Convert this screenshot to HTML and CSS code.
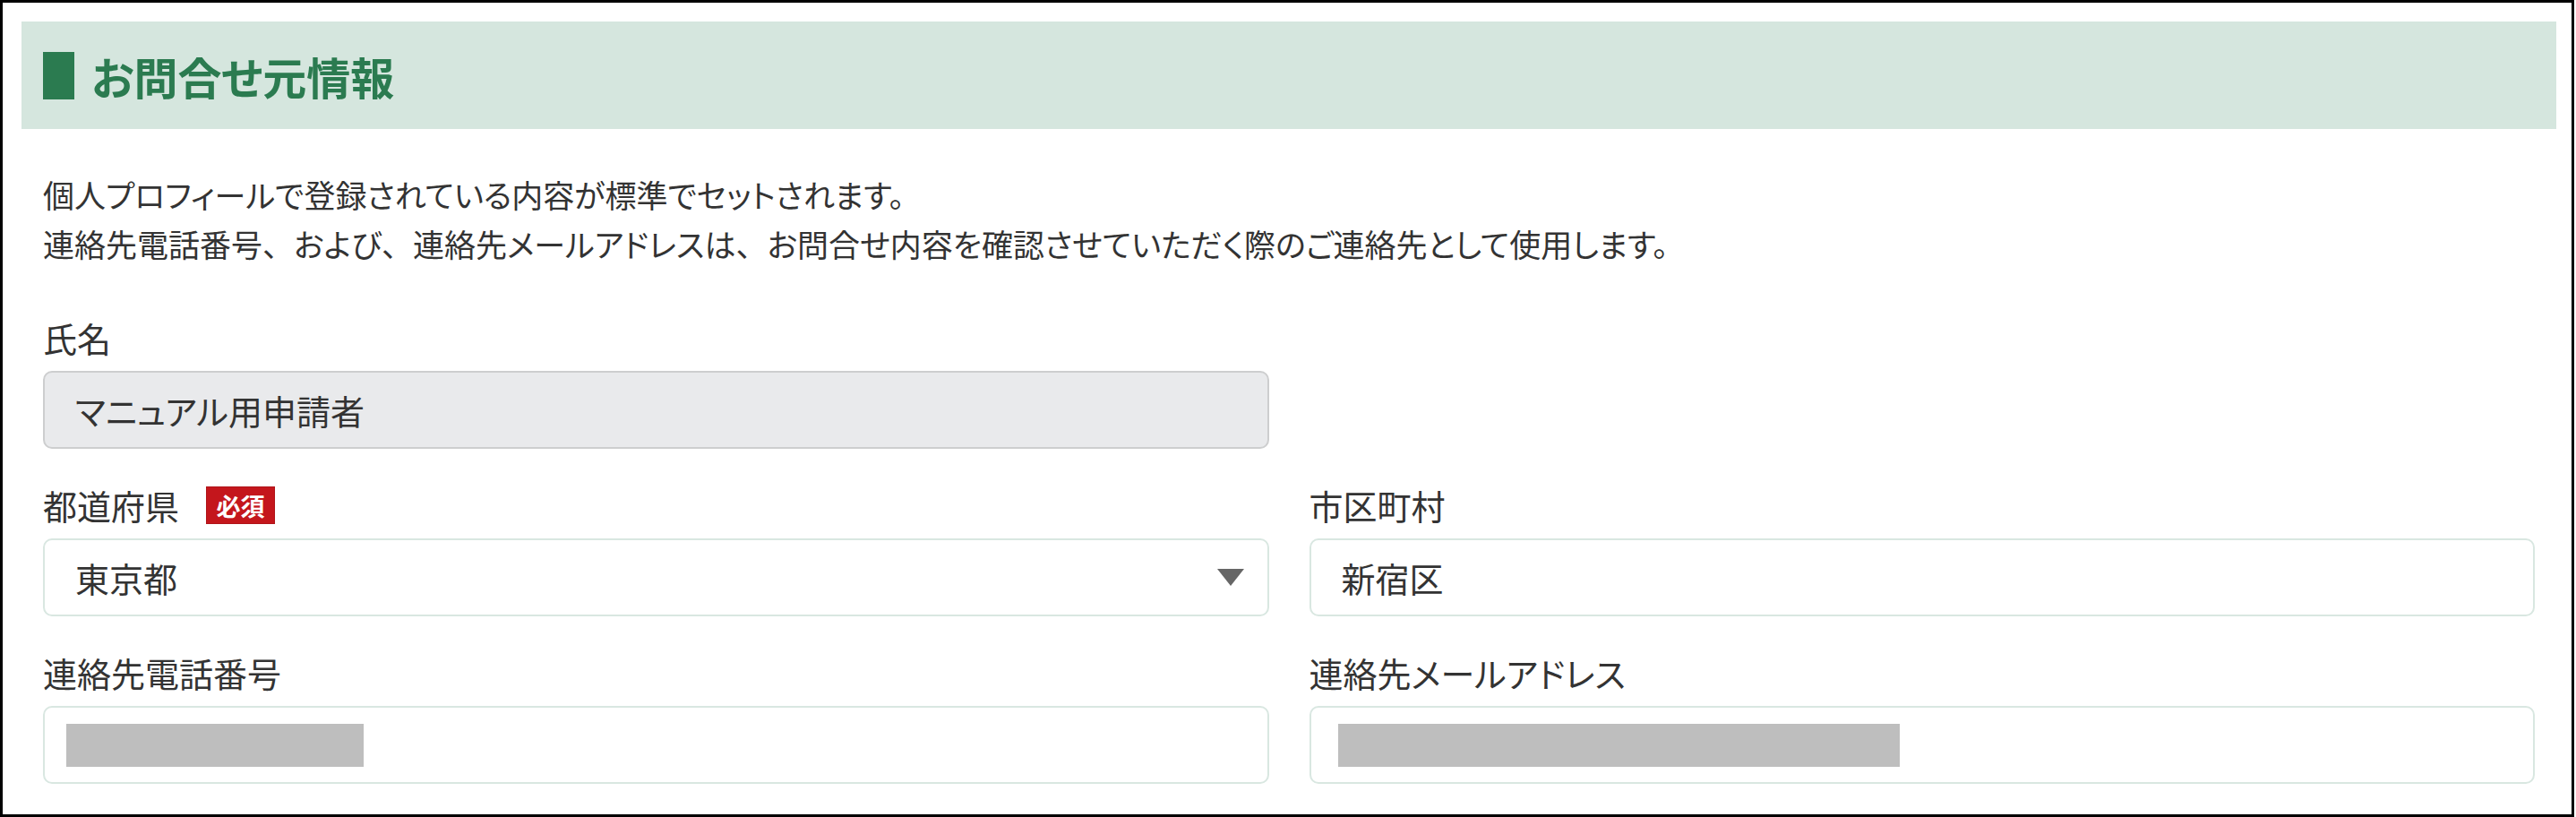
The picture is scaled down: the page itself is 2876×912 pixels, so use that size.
FILE: index.html
```html
<!DOCTYPE html>
<html lang="ja">
<head>
<meta charset="utf-8">
<link rel="stylesheet" href="styles.css">
</head>
<body>
<div class="frame">
  <div class="section-head">
    <span class="bar"></span>
    <h2 class="title">お問合せ元情報</h2>
  </div>
  <div class="content">
    <p class="desc">個人プロフィールで登録されている内容が標準でセットされます。<br>連絡先電話番号<span class="pn">、</span>および<span class="pn">、</span>連絡先メールアドレスは<span class="pn">、</span>お問合せ内容を確認させていただく際のご連絡先として使用します。</p>
    <div class="grid">
      <div class="field">
        <div class="label">氏名</div>
        <div class="input readonly">マニュアル用申請者</div>
      </div>
      <div class="field empty"></div>
      <div class="field">
        <div class="label">都道府県<span class="badge">必須</span></div>
        <div class="input select">東京都<span class="arrow"></span></div>
      </div>
      <div class="field">
        <div class="label">市区町村</div>
        <div class="input">新宿区</div>
      </div>
      <div class="field">
        <div class="label">連絡先電話番号</div>
        <div class="input"><span class="mask mask-phone"></span></div>
      </div>
      <div class="field">
        <div class="label">連絡先メールアドレス</div>
        <div class="input"><span class="mask mask-mail"></span></div>
      </div>
    </div>
  </div>
</div>
</body>
</html>
```

FILE: styles.css
```css
* { box-sizing: border-box; }
html, body { margin: 0; padding: 0; background: #fff; }
body {
  font-family: "Noto Sans CJK JP", "Noto Sans", sans-serif;
  color: #333;
  font-feature-settings: "palt";
}
.frame {
  width: 2874px;
  height: 912px;
  border: 3px solid #000;
  padding: 21px 17px 0 21px;
  overflow: hidden;
}
.section-head {
  height: 120px;
  background: #d5e6de;
  display: flex;
  align-items: center;
  padding-left: 24px;
  gap: 19px;
}
.bar {
  width: 35px;
  height: 53px;
  background: #2b7b50;
}
.title {
  margin: 0;
  font-size: 49px;
  font-weight: 700;
  color: #2b7b50;
  line-height: 1;
}
.content {
  padding: 45px 24px 0 24px;
}
.desc {
  margin: 0 0 53px 0;
  font-size: 35px;
  line-height: 55px;
}
.pn { font-feature-settings: normal; }
.grid {
  display: grid;
  grid-template-columns: 1fr 1fr;
  column-gap: 45px;
  row-gap: 38px;
}
.label {
  font-size: 38px;
  line-height: 50px;
  height: 50px;
  margin-bottom: 12px;
  display: flex;
  align-items: center;
}
.badge {
  display: inline-flex;
  align-items: center;
  justify-content: center;
  margin-left: 30px;
  width: 77px;
  height: 42px;
  background: #c4161c;
  border: 1px solid #b01419;
  color: #fff;
  font-size: 27px;
  font-weight: 700;
  line-height: 1;
}
.input {
  height: 87px;
  border: 2px solid #d9e7e1;
  border-radius: 10px;
  background: #fff;
  display: flex;
  align-items: center;
  padding: 0 30px 0 34px;
  font-size: 38px;
  position: relative;
}
.input.readonly {
  background: #e9eaec;
  border-color: #cdcecf;
}
.input.select { justify-content: space-between; padding-right: 26px; }
.arrow {
  width: 0;
  height: 0;
  border-left: 15px solid transparent;
  border-right: 15px solid transparent;
  border-top: 19px solid #666;
}
.mask {
  display: block;
  height: 48px;
  background: #bebebe;
}
.mask-phone { width: 332px; margin-left: -10px; }
.mask-mail { width: 627px; margin-left: -4px; }
```
